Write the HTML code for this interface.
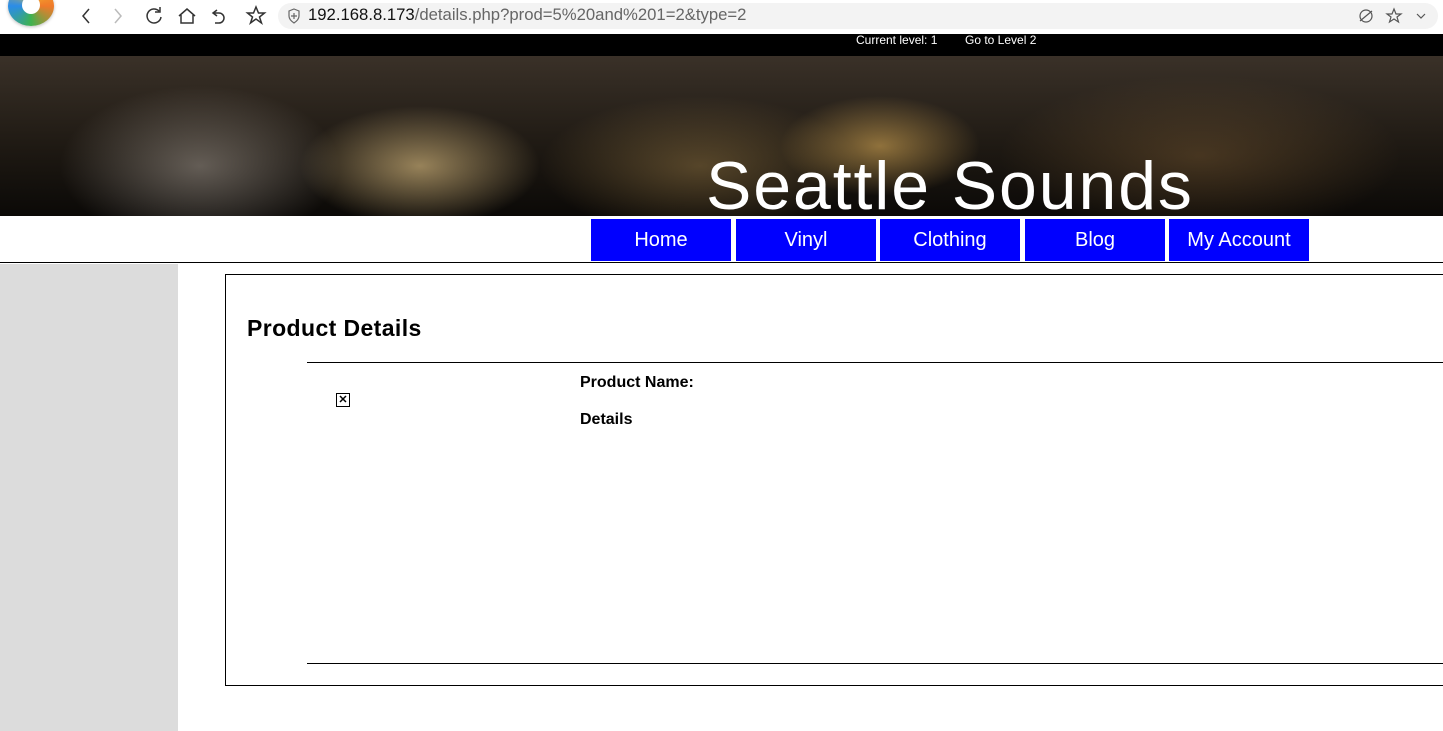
<!DOCTYPE html>
<html><head><style>
body{margin:0;width:1443px;height:731px;overflow:hidden;font-family:"Liberation Sans",Arial,sans-serif;background:#fff;position:relative}
.abs{position:absolute}
.nb{position:absolute;top:219px;width:140px;height:42px;background:#00f;color:#fff;font-size:20px;text-align:center;line-height:42px}
</style></head><body>
<div class="abs" style="left:0;top:0;width:1443px;height:34px;background:#fff"></div>
<div class="abs" style="left:8px;top:-14px;width:46px;height:40px;border-radius:50%;background:conic-gradient(#f5c12e,#f07a2a,#3fb24f,#2b8ce8,#f5c12e);box-shadow:0 1px 3px #bbb"></div>
<div class="abs" style="left:22px;top:-4px;width:18px;height:18px;border-radius:50%;background:#fff"></div>
<svg class="abs" style="left:70px;top:3px" width="200" height="26" fill="none" stroke="#333" stroke-width="1.5">
<path d="M19 6l-6 7 6 7"/><path d="M45 6l6 7-6 7" stroke="#bbb"/>
<path d="M89 8a7 7 0 1 0 2 6M90 4v5h-5"/>
<path d="M109 13l8-7 8 7M111 12v8h12v-8"/>
<path d="M147 7l-4 3 4 3M143 10h6a5 5 0 0 1 0 10h-4"/>
<path d="M186 4l2.5 6h6l-5 4 2 6-5.5-4-5.5 4 2-6-5-4h6z"/>
</svg>
<div class="abs" style="left:278px;top:3px;width:1160px;height:26px;border-radius:13px;background:#f3f3f3"></div>
<svg class="abs" style="left:287px;top:8px" width="14" height="16" fill="none" stroke="#666" stroke-width="1.2"><path d="M7 1l5 2v5c0 3-2 5-5 7-3-2-5-4-5-7V3z"/><path d="M7 5v6M4 8h6"/></svg>
<div class="abs" style="left:308px;top:5px;font-size:16.7px;color:#111">192.168.8.173<span style="color:#666">/details.php?prod=5%20and%201=2&amp;type=2</span></div>
<svg class="abs" style="left:1358px;top:7px" width="80" height="18" fill="none" stroke="#555" stroke-width="1.2"><circle cx="8" cy="9" r="6"/><path d="M2 14L14 4"/><path d="M36 2l2 5h5l-4 3 1.5 5-4.5-3-4.5 3 1.5-5-4-3h5z"/><path d="M59 7l4 4 4-4"/></svg>
<div class="abs" style="left:0;top:34px;width:1443px;height:22px;background:#000"></div>
<div class="abs" style="left:856px;top:33px;font-size:12px;color:#fff">Current level: 1</div>
<div class="abs" style="left:965px;top:33px;font-size:12px;color:#fff">Go to Level 2</div>
<div class="abs" style="left:0;top:56px;width:1443px;height:160px;background:
radial-gradient(ellipse 120px 60px at 420px 110px,rgba(255,220,150,.55),transparent),
radial-gradient(ellipse 100px 50px at 880px 90px,rgba(255,200,100,.5),transparent),
radial-gradient(ellipse 160px 70px at 700px 110px,rgba(200,160,90,.35),transparent),
radial-gradient(ellipse 140px 80px at 200px 110px,rgba(190,180,170,.45),transparent),
radial-gradient(ellipse 200px 80px at 1200px 100px,rgba(150,110,60,.35),transparent),
linear-gradient(#3a3128,#1d1812 60%,#0b0907)"></div>
<div class="abs" style="left:706px;top:146px;font-size:68px;color:#fff;line-height:80px;letter-spacing:1.9px">Seattle Sounds</div>
<div class="abs" style="left:0;top:262px;width:1443px;height:1px;background:#000"></div>
<div class="nb" style="left:591px">Home</div>
<div class="nb" style="left:736px">Vinyl</div>
<div class="nb" style="left:880px">Clothing</div>
<div class="nb" style="left:1025px">Blog</div>
<div class="nb" style="left:1169px">My Account</div>
<div class="abs" style="left:0;top:264px;width:178px;height:467px;background:#dcdcdc"></div>
<div class="abs" style="left:225px;top:274px;width:1230px;height:410px;border:1px solid #000"></div>
<div class="abs" style="left:247px;top:315px;font-size:23px;font-weight:bold;letter-spacing:0.4px">Product Details</div>
<div class="abs" style="left:307px;top:362px;width:1140px;height:1px;background:#000"></div>
<div class="abs" style="left:307px;top:663px;width:1140px;height:1px;background:#000"></div>
<div class="abs" style="left:336px;top:393px;width:12px;height:12px;border:1px solid #000;font-size:11px;line-height:12px;text-align:center;font-weight:bold">✕</div>
<div class="abs" style="left:580px;top:374px;font-size:16px;font-weight:bold">Product Name:</div>
<div class="abs" style="left:580px;top:411px;font-size:16px;font-weight:bold">Details</div>
</body></html>
